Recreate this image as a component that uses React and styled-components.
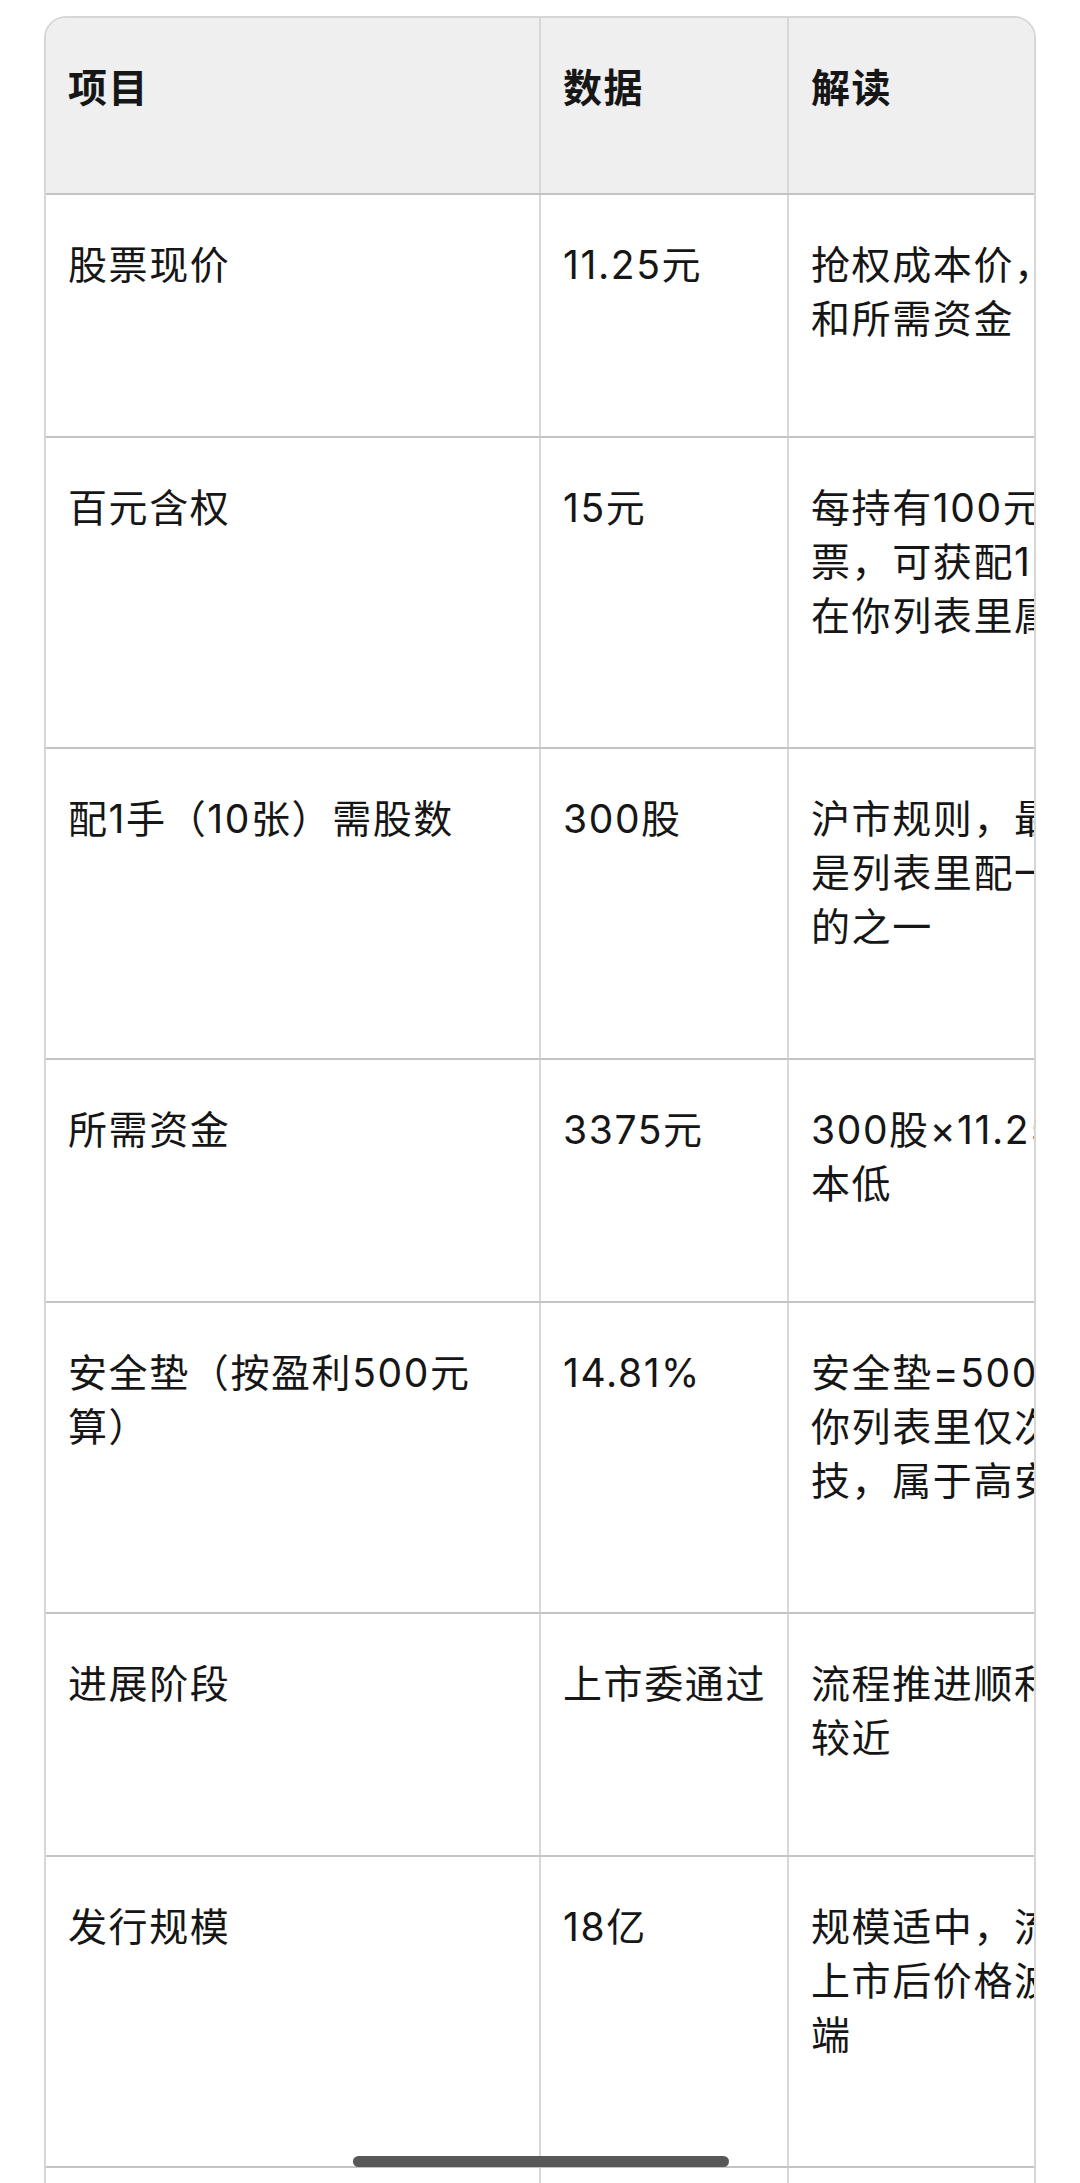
import React from 'react'
import styled, { createGlobalStyle } from 'styled-components'

const GlobalStyle = createGlobalStyle`
  html, body {
    margin: 0;
    padding: 0;
    background: #ffffff;
  }
  * { box-sizing: border-box; }
`

const rows = [
  { item: '股票现价', value: '11.25元', note: ['抢权成本价，', '和所需资金'], tall: false },
  { item: '百元含权', value: '15元', note: ['每持有100元', '票，可获配15', '在你列表里属'], tall: true },
  { item: '配1手（10张）需股数', value: '300股', note: ['沪市规则，最', '是列表里配一', '的之一'], tall: true },
  { item: '所需资金', value: '3375元', note: ['300股×11.25', '本低'], tall: false },
  { item: '安全垫（按盈利500元算）', value: '14.81%', note: ['安全垫=500/', '你列表里仅次', '技，属于高安'], tall: true },
  { item: '进展阶段', value: '上市委通过', note: ['流程推进顺利', '较近'], tall: false },
  { item: '发行规模', value: '18亿', note: ['规模适中，流', '上市后价格波', '端'], tall: true },
]

const Page = styled.div`
  height: 2183px;
  overflow: hidden;
  padding: 16px 44px 0 44px;
  position: relative;
  font-family: Inter, "Noto Sans CJK SC", sans-serif;
  color: #161616;
`

const Card = styled.div`
  border: 2px solid #d6d6d6;
  border-bottom: none;
  border-radius: 22px 22px 0 0;
  overflow: hidden;
`

const Table = styled.div`
  width: 1240px;
`

const Row = styled.div`
  display: grid;
  grid-template-columns: 493px 248px 499px;
  height: ${(p) => p.$height}px;
  border-bottom: 2px solid #c4c4c4;
  background: ${(p) => (p.$head ? '#efefef' : '#ffffff')};
`

const Cell = styled.div`
  padding: 43px 22px 0 22px;
  font-size: 39px;
  line-height: 54px;
  letter-spacing: 1.6px;
  font-weight: ${(p) => (p.$head ? 700 : 400)};
  border-left: ${(p) => (p.$first ? 'none' : '2px solid #d8d8d8')};
  white-space: ${(p) => (p.$nowrap ? 'nowrap' : 'normal')};
  overflow: hidden;
`

const ItemCell = styled(Cell)`
  padding-right: 50px;
`

const NoteLine = styled.div`
  white-space: nowrap;
`

const HomeBar = styled.div`
  position: absolute;
  left: 353px;
  top: 2156px;
  width: 376px;
  height: 11px;
  border-radius: 6px;
  background: #585858;
`

export default function App() {
  return (
    <Page>
      <GlobalStyle />
      <Card>
        <Table>
          <Row $head $height={177}>
            <Cell $head $first>项目</Cell>
            <Cell $head>数据</Cell>
            <Cell $head>解读</Cell>
          </Row>
          {rows.map((r) => (
            <Row key={r.item} $height={r.tall ? 311 : 243}>
              <ItemCell $first>{r.item}</ItemCell>
              <Cell $nowrap>{r.value}</Cell>
              <Cell>
                {r.note.map((line) => (
                  <NoteLine key={line}>{line}</NoteLine>
                ))}
              </Cell>
            </Row>
          ))}
          <Row $height={200}>
            <ItemCell $first />
            <Cell />
            <Cell />
          </Row>
        </Table>
      </Card>
      <HomeBar />
    </Page>
  )
}
